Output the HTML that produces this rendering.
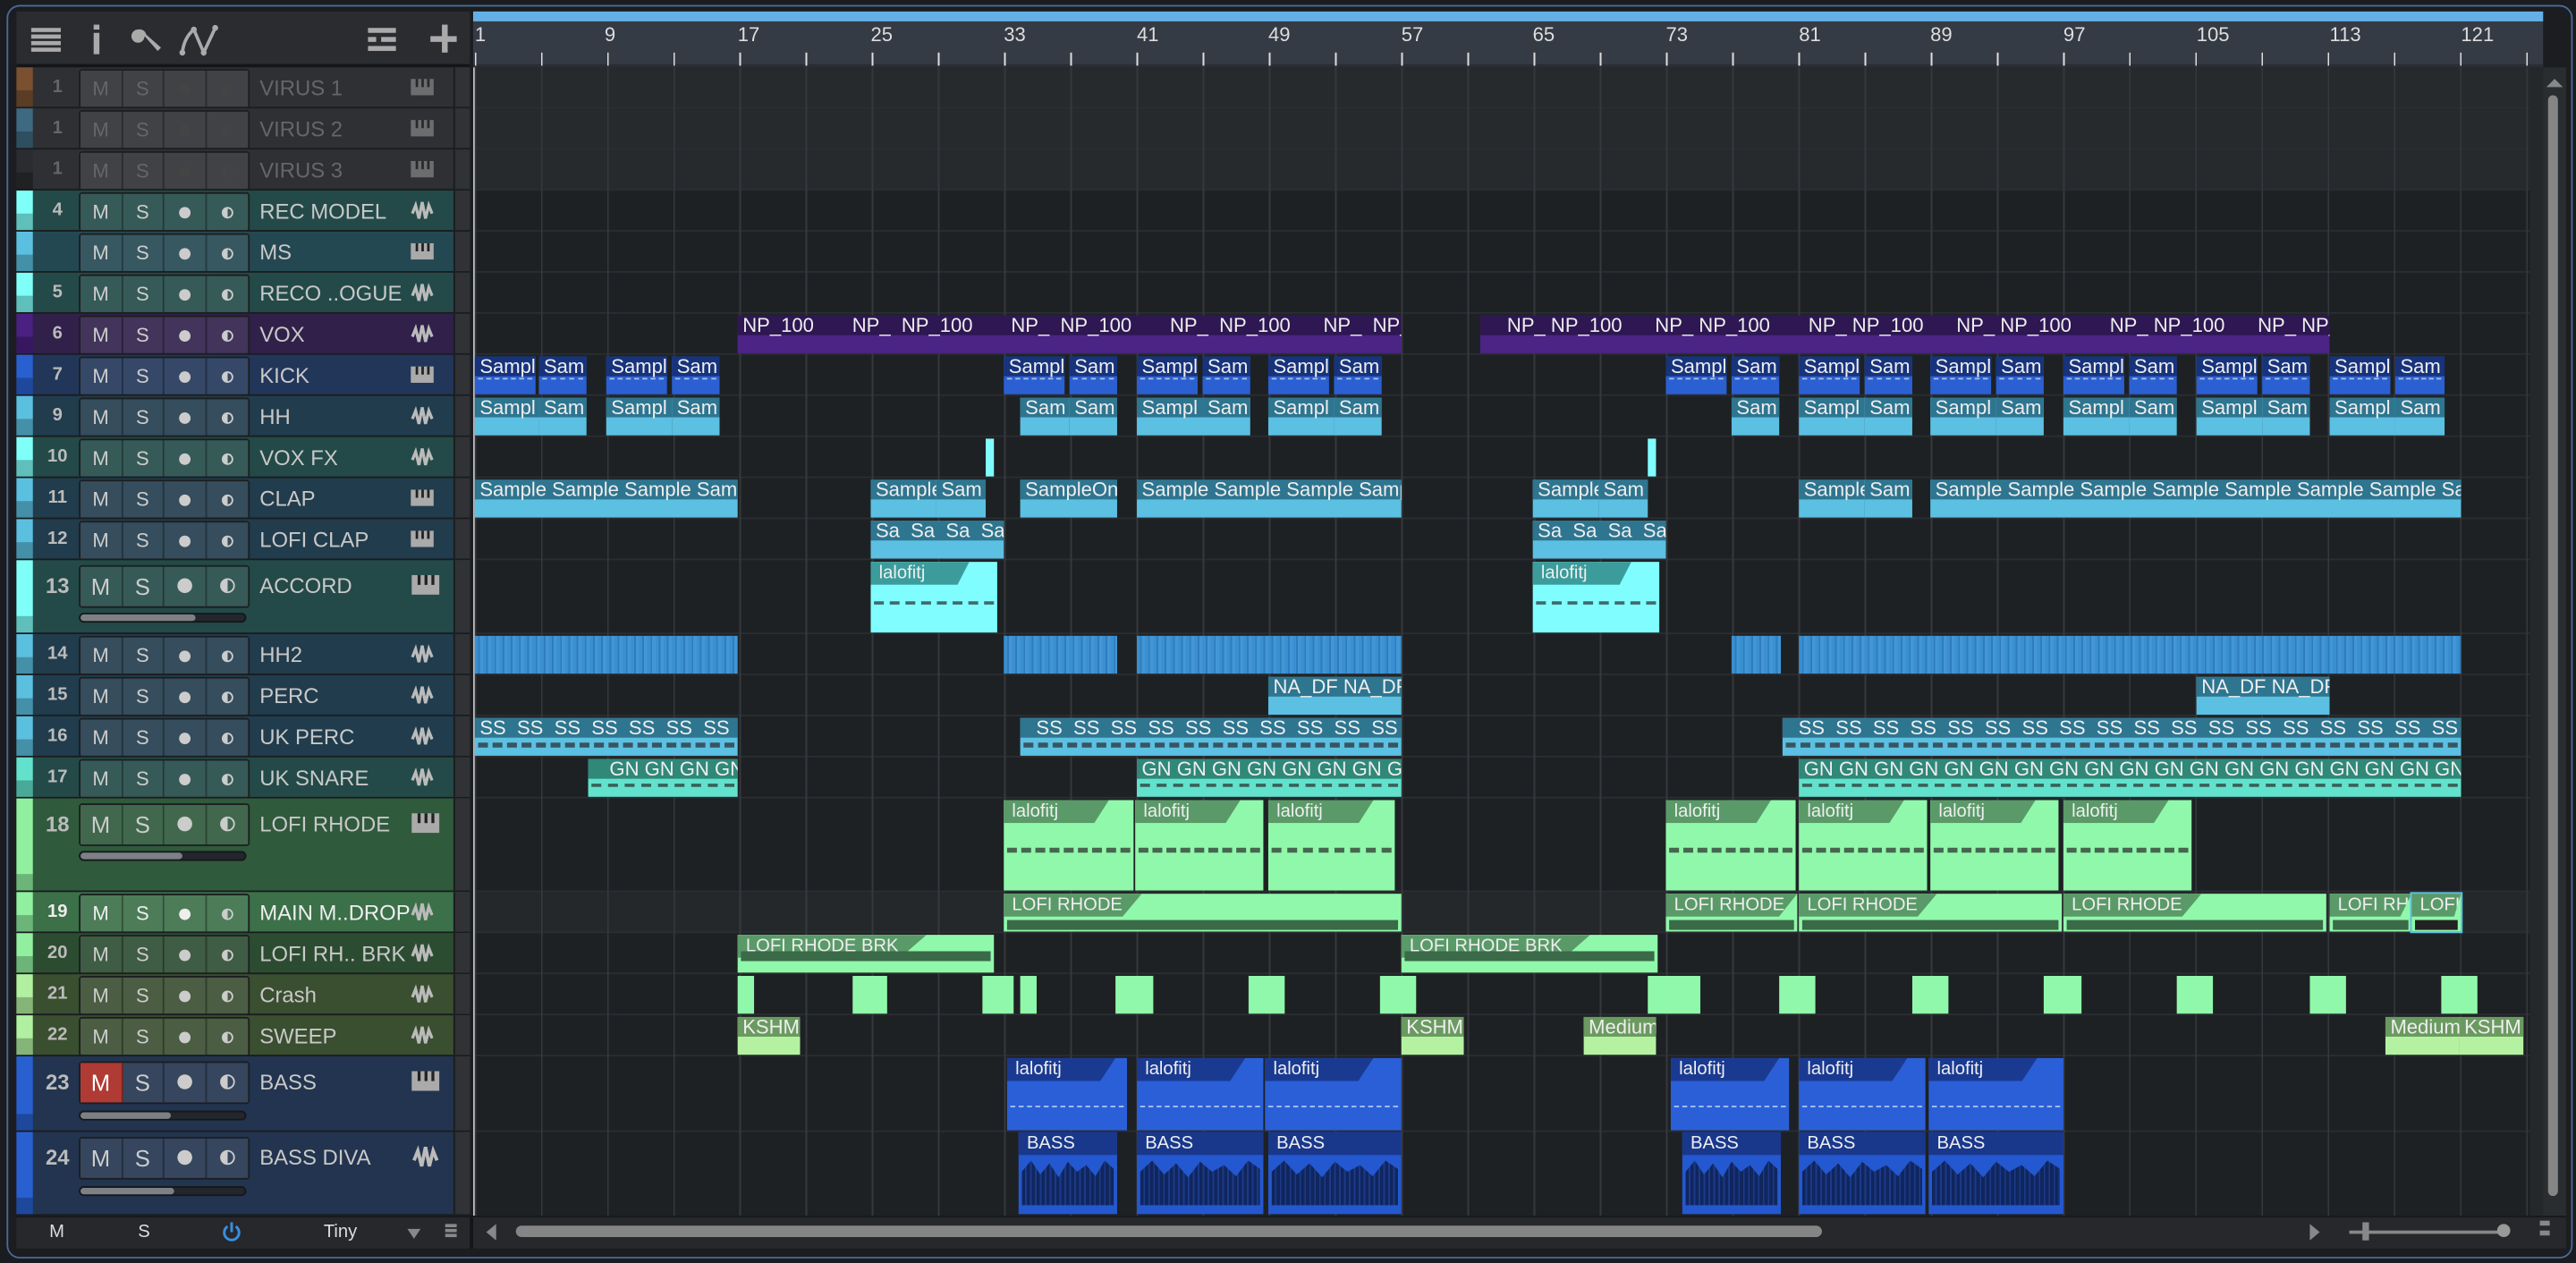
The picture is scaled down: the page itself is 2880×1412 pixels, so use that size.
<!DOCTYPE html>
<html><head><meta charset="utf-8"><style>
*{margin:0;padding:0;box-sizing:border-box}
html,body{width:2880px;height:1412px;overflow:hidden;background:#16181a}
#s{position:absolute;left:0;top:0;width:1568px;height:769px;transform:scale(1.83673);transform-origin:0 0;font-family:"Liberation Sans",sans-serif;background:#1a1c1f}
.a{position:absolute}
.frame{left:4px;top:3px;width:1562px;height:763px;border:1.5px solid #4a6a9a;border-radius:8px;background:#1b1d20}
.tr{position:absolute;left:10px;width:276px;border-bottom:1px solid #1a1c1e}
.st{position:absolute;left:0;top:0;width:10px;height:100%}
.st i{position:absolute;left:0;bottom:0;width:10px;height:10px;background:rgba(0,0,0,.25)}
.num{position:absolute;left:12px;width:26px;text-align:center;font-size:11px;font-weight:bold;color:#bbb}
.bt{position:absolute;left:38px;display:flex;border:1px solid #1c1e20;border-radius:2px}
.bt span{display:block;width:25.5px;border-right:1px solid rgba(0,0,0,.35);background:rgba(255,255,255,.09);color:#ccc;text-align:center;font-size:12px}
.bt span:last-child{border-right:0}
.dot{display:inline-block;width:7px;height:7px;border-radius:50%;background:#ccc}
.bt span:last-child .dot{background:linear-gradient(90deg,#ccc 50%,transparent 50%);border:1.5px solid #ccc}
.nm{position:absolute;left:148px;font-size:13px;color:#c8c8c8;white-space:nowrap}
.ic{position:absolute;left:240px}
.rc{position:absolute;left:266px;top:0;width:10px;height:100%;background:#303236;border-left:1px solid #1a1c1e}
.sl{position:absolute;left:38px;width:102px;height:6px;border-radius:3px;background:#23262a;border:1px solid #15171a}
.sl b{display:block;height:100%;border-radius:3px;background:#7d8084}
.dim .nm,.dim .num,.dim .bt span{color:#666}.dim .dot{background:#444}
.dim .bt span:last-child .dot{background:linear-gradient(90deg,#444 50%,transparent 50%);border-color:#444}
.row{position:absolute;left:288px;width:1260px;border-bottom:1px solid #2a2d31}
.c{position:absolute;overflow:hidden;font-size:12px;color:#eee;white-space:nowrap}
.c b{display:block;font-weight:normal;padding-left:3px;height:12px;line-height:12px}
.c.t b{height:14px;line-height:14px;font-size:11px;padding-left:5px}
.vox{background:#4b2486}.vox b{background:#2e1752}
.k{background:#2a60d2}.k b{background:#17337c}
.h{background:#5bc0e2}.h b{background:#2e7590}
.g{background:#62e2cc}.g b{background:#2f8878}
.cy{background:#80feff}.cy b{background:#3c9c9c;width:60px;clip-path:polygon(0 0,100% 0,88% 100%,0 100%)}
.hh2{background:repeating-linear-gradient(90deg,#3a8fd0 0 2px,#2f7cbd 2px 3px,#4196d6 3px 5px)}
.gr{background:#90f8aa}.gr b{background:#5a9a68;width:64px;clip-path:polygon(0 0,100% 0,86% 100%,0 100%)}
.gw{background:#90f8aa}.gw b{background:#5a9a68}
.sw{background:#b4f2a2}.sw b{background:#6a9a60}
.bs{background:#2a5fd8}.bs b{background:#1a3a92;width:66px;clip-path:polygon(0 0,100% 0,86% 100%,0 100%)}
.bd{background:#2458d0}.bd b{background:#19388c}
.wv{position:absolute;left:2px;right:2px;top:60%;border-top:2px dashed rgba(40,40,40,.7)}
.wl{position:absolute;left:2px;right:2px;top:58%;border-top:1px dashed rgba(255,255,255,.6)}
.bw{position:absolute;left:2px;right:2px;top:14px;bottom:2px;background:repeating-linear-gradient(90deg,#10265e 0 2px,#1b3a88 2px 3px);clip-path:polygon(0 30%,10% 10%,20% 35%,30% 15%,40% 40%,50% 12%,60% 30%,70% 18%,80% 38%,90% 10%,100% 25%,100% 90%,0 90%)}
.rl{position:absolute;top:14px;font-size:12px;color:#ddd}
</style></head><body><div id="s">
<div class="a frame"></div>
<!-- toolbar -->
<div class="a" style="left:10px;top:7px;width:276px;height:34px;background:#2a2c30;border-bottom:2px solid #141518"></div>
<svg class="a" style="left:18px;top:14px" width="260" height="20" viewBox="0 0 260 20">
<g fill="#aaa"><rect x="1" y="3" width="18" height="2.5"/><rect x="1" y="7" width="18" height="2.5"/><rect x="1" y="11" width="18" height="2.5"/><rect x="1" y="15" width="18" height="2.5"/>
<rect x="39" y="1" width="3.5" height="3"/><rect x="39" y="6" width="3.5" height="13"/>
<rect x="206" y="3" width="17" height="3"/><rect x="206" y="8.5" width="5" height="3"/><rect x="214" y="8.5" width="9" height="3"/><rect x="206" y="14" width="17" height="3"/>
<rect x="244" y="8" width="17" height="3.5"/><rect x="251" y="1" width="3.5" height="17"/></g>
<path d="M66 4a4 4 0 1 0 4 4l8 9 2-2-9-8a4 4 0 0 0-5-3" fill="#aaa"/>
<path d="M93 18q1-9 7-14l6 14 7-15" stroke="#aaa" stroke-width="2" fill="none"/>
<g fill="#aaa"><circle cx="93" cy="18" r="1.8"/><circle cx="100" cy="4" r="1.8"/><circle cx="106" cy="18" r="1.8"/><circle cx="113" cy="3" r="1.8"/></g>
</svg>
<!-- ruler -->
<div class="a" style="left:288px;top:7px;width:1260px;height:34px;background:#353b45;border-bottom:2px solid #2a2e34"></div>
<div class="a" style="left:288px;top:7px;width:1260px;height:6px;background:#64b0e6"></div>
<div class="a" style="left:289px;top:32px;width:1250px;height:8px;background:repeating-linear-gradient(90deg,#ddd 0 1px,transparent 1px 40.28px)"></div>
<div class="rl" style="left:289px">1</div><div class="rl" style="left:368px">9</div><div class="rl" style="left:449px">17</div><div class="rl" style="left:530px">25</div><div class="rl" style="left:611px">33</div><div class="rl" style="left:692px">41</div><div class="rl" style="left:772px">49</div><div class="rl" style="left:853px">57</div><div class="rl" style="left:933px">65</div><div class="rl" style="left:1014px">73</div><div class="rl" style="left:1095px">81</div><div class="rl" style="left:1175px">89</div><div class="rl" style="left:1256px">97</div><div class="rl" style="left:1337px">105</div><div class="rl" style="left:1418px">113</div><div class="rl" style="left:1498px">121</div>
<!-- timeline bg -->
<div class="a" style="left:288px;top:41px;width:1260px;height:699px;background:#1e2123"></div>
<div class="a" style="left:288px;top:41px;width:1260px;height:75px;background:#272a2d"></div>
<div class="a" style="left:288px;top:543px;width:1260px;height:25px;background:#25282b"></div>
<div class="row" style="top:41px;height:25px"></div><div class="row" style="top:66px;height:25px"></div><div class="row" style="top:91px;height:25px"></div><div class="row" style="top:116px;height:25px"></div><div class="row" style="top:141px;height:25px"></div><div class="row" style="top:166px;height:25px"></div><div class="row" style="top:191px;height:25px"></div><div class="row" style="top:216px;height:25px"></div><div class="row" style="top:241px;height:25px"></div><div class="row" style="top:266px;height:25px"></div><div class="row" style="top:291px;height:25px"></div><div class="row" style="top:316px;height:25px"></div><div class="row" style="top:341px;height:45px"></div><div class="row" style="top:386px;height:25px"></div><div class="row" style="top:411px;height:25px"></div><div class="row" style="top:436px;height:25px"></div><div class="row" style="top:461px;height:25px"></div><div class="row" style="top:486px;height:57px"></div><div class="row" style="top:543px;height:25px"></div><div class="row" style="top:568px;height:25px"></div><div class="row" style="top:593px;height:25px"></div><div class="row" style="top:618px;height:25px"></div><div class="row" style="top:643px;height:46px"></div>
<div class="a" style="left:289px;top:41px;width:1250px;height:699px;background:repeating-linear-gradient(90deg,#35383c 0 1px,transparent 1px 40.28px)"></div>
<div class="a" style="left:288px;top:41px;width:1px;height:699px;background:#bbb"></div>
<!-- right scroll -->
<div class="a" style="left:1540px;top:41px;width:8px;height:699px;background:#25282b"></div>
<div class="a" style="left:1548px;top:41px;width:14px;height:699px;background:#2a2d30"></div>
<div class="a" style="left:1550px;top:48px;width:0;height:0;border-left:5px solid transparent;border-right:5px solid transparent;border-bottom:5px solid #888"></div>
<div class="a" style="left:1551px;top:58px;width:6px;height:670px;border-radius:3px;background:#858585"></div>
<!-- clips -->
<div class="c vox" style="left:449px;top:192px;width:404px;height:23px"><b>NP_100&nbsp;&nbsp;&nbsp;&nbsp;&nbsp;&nbsp; NP_&nbsp;&nbsp;NP_100&nbsp;&nbsp;&nbsp;&nbsp;&nbsp;&nbsp;&nbsp;NP_&nbsp;&nbsp;NP_100&nbsp;&nbsp;&nbsp;&nbsp;&nbsp;&nbsp; NP_&nbsp;&nbsp;NP_100&nbsp;&nbsp;&nbsp;&nbsp;&nbsp;&nbsp;NP_&nbsp;&nbsp;NP_100&nbsp;&nbsp;&nbsp;&nbsp;&nbsp;&nbsp;&nbsp;NP_</b></div>
<div class="c vox" style="left:901px;top:192px;width:517px;height:23px"><b>&nbsp;&nbsp;&nbsp;&nbsp;NP_&nbsp;NP_100&nbsp;&nbsp;&nbsp;&nbsp;&nbsp;&nbsp;NP_&nbsp;NP_100&nbsp;&nbsp;&nbsp;&nbsp;&nbsp;&nbsp;&nbsp;NP_&nbsp;NP_100&nbsp;&nbsp;&nbsp;&nbsp;&nbsp;&nbsp;NP_&nbsp;NP_100&nbsp;&nbsp;&nbsp;&nbsp;&nbsp;&nbsp;&nbsp;NP_&nbsp;NP_100&nbsp;&nbsp;&nbsp;&nbsp;&nbsp;&nbsp;NP_&nbsp;NP_100&nbsp;&nbsp;&nbsp;&nbsp;&nbsp;&nbsp;NP_</b></div>
<!-- kick -->
<div class="c k" style="left:289px;top:217px;width:37px;height:23px"><b>Sampl</b><i class="wl"></i></div><div class="c k" style="left:328px;top:217px;width:29px;height:23px"><b>Sam</b><i class="wl"></i></div>
<div class="c k" style="left:369px;top:217px;width:37px;height:23px"><b>Sampl</b><i class="wl"></i></div><div class="c k" style="left:409px;top:217px;width:29px;height:23px"><b>Sam</b><i class="wl"></i></div>
<div class="c k" style="left:611px;top:217px;width:37px;height:23px"><b>Sampl</b><i class="wl"></i></div><div class="c k" style="left:651px;top:217px;width:29px;height:23px"><b>Sam</b><i class="wl"></i></div>
<div class="c k" style="left:692px;top:217px;width:37px;height:23px"><b>Sampl</b><i class="wl"></i></div><div class="c k" style="left:732px;top:217px;width:29px;height:23px"><b>Sam</b><i class="wl"></i></div>
<div class="c k" style="left:772px;top:217px;width:37px;height:23px"><b>Sampl</b><i class="wl"></i></div><div class="c k" style="left:812px;top:217px;width:29px;height:23px"><b>Sam</b><i class="wl"></i></div>
<div class="c k" style="left:1014px;top:217px;width:37px;height:23px"><b>Sampl</b><i class="wl"></i></div><div class="c k" style="left:1054px;top:217px;width:29px;height:23px"><b>Sam</b><i class="wl"></i></div>
<div class="c k" style="left:1095px;top:217px;width:37px;height:23px"><b>Sampl</b><i class="wl"></i></div><div class="c k" style="left:1135px;top:217px;width:29px;height:23px"><b>Sam</b><i class="wl"></i></div>
<div class="c k" style="left:1175px;top:217px;width:37px;height:23px"><b>Sampl</b><i class="wl"></i></div><div class="c k" style="left:1215px;top:217px;width:29px;height:23px"><b>Sam</b><i class="wl"></i></div>
<div class="c k" style="left:1256px;top:217px;width:37px;height:23px"><b>Sampl</b><i class="wl"></i></div><div class="c k" style="left:1296px;top:217px;width:29px;height:23px"><b>Sam</b><i class="wl"></i></div>
<div class="c k" style="left:1337px;top:217px;width:37px;height:23px"><b>Sampl</b><i class="wl"></i></div><div class="c k" style="left:1377px;top:217px;width:29px;height:23px"><b>Sam</b><i class="wl"></i></div>
<div class="c k" style="left:1418px;top:217px;width:37px;height:23px"><b>Sampl</b><i class="wl"></i></div><div class="c k" style="left:1458px;top:217px;width:30px;height:23px"><b>Sam</b><i class="wl"></i></div>
<!-- hh -->
<div class="c h" style="left:289px;top:242px;width:39px;height:23px"><b>Sampl</b></div><div class="c h" style="left:328px;top:242px;width:29px;height:23px"><b>Sam</b></div>
<div class="c h" style="left:369px;top:242px;width:40px;height:23px"><b>Sampl</b></div><div class="c h" style="left:409px;top:242px;width:29px;height:23px"><b>Sam</b></div>
<div class="c h" style="left:621px;top:242px;width:30px;height:23px"><b>Sam</b></div><div class="c h" style="left:651px;top:242px;width:29px;height:23px"><b>Sam</b></div>
<div class="c h" style="left:692px;top:242px;width:40px;height:23px"><b>Sampl</b></div><div class="c h" style="left:732px;top:242px;width:29px;height:23px"><b>Sam</b></div>
<div class="c h" style="left:772px;top:242px;width:40px;height:23px"><b>Sampl</b></div><div class="c h" style="left:812px;top:242px;width:29px;height:23px"><b>Sam</b></div>
<div class="c h" style="left:1054px;top:242px;width:29px;height:23px"><b>Sam</b></div>
<div class="c h" style="left:1095px;top:242px;width:40px;height:23px"><b>Sampl</b></div><div class="c h" style="left:1135px;top:242px;width:29px;height:23px"><b>Sam</b></div>
<div class="c h" style="left:1175px;top:242px;width:40px;height:23px"><b>Sampl</b></div><div class="c h" style="left:1215px;top:242px;width:29px;height:23px"><b>Sam</b></div>
<div class="c h" style="left:1256px;top:242px;width:40px;height:23px"><b>Sampl</b></div><div class="c h" style="left:1296px;top:242px;width:29px;height:23px"><b>Sam</b></div>
<div class="c h" style="left:1337px;top:242px;width:40px;height:23px"><b>Sampl</b></div><div class="c h" style="left:1377px;top:242px;width:29px;height:23px"><b>Sam</b></div>
<div class="c h" style="left:1418px;top:242px;width:40px;height:23px"><b>Sampl</b></div><div class="c h" style="left:1458px;top:242px;width:30px;height:23px"><b>Sam</b></div>
<!-- vox fx -->
<div class="c" style="left:600px;top:267px;width:5px;height:23px;background:#80feff"></div>
<div class="c" style="left:1003px;top:267px;width:5px;height:23px;background:#80feff"></div>
<!-- clap -->
<div class="c h" style="left:289px;top:292px;width:160px;height:23px"><b>Sample&nbsp;Sample&nbsp;Sample&nbsp;Sample</b></div>
<div class="c h" style="left:530px;top:292px;width:40px;height:23px"><b>Sample</b></div><div class="c h" style="left:570px;top:292px;width:30px;height:23px"><b>Sam</b></div>
<div class="c h" style="left:621px;top:292px;width:59px;height:23px"><b>SampleOn</b></div>
<div class="c h" style="left:692px;top:292px;width:161px;height:23px"><b>Sample&nbsp;Sample&nbsp;Sample&nbsp;Sample</b></div>
<div class="c h" style="left:933px;top:292px;width:40px;height:23px"><b>Sample</b></div><div class="c h" style="left:973px;top:292px;width:30px;height:23px"><b>Sam</b></div>
<div class="c h" style="left:1095px;top:292px;width:40px;height:23px"><b>Sample</b></div><div class="c h" style="left:1135px;top:292px;width:29px;height:23px"><b>Sam</b></div>
<div class="c h" style="left:1175px;top:292px;width:323px;height:23px"><b>Sample&nbsp;Sample&nbsp;Sample&nbsp;Sample&nbsp;Sample&nbsp;Sample&nbsp;Sample&nbsp;Sample</b></div>
<!-- lofi clap -->
<div class="c h" style="left:530px;top:317px;width:81px;height:23px"><b>Sa&nbsp;&nbsp;Sa&nbsp;&nbsp;Sa&nbsp;&nbsp;Sa</b></div>
<div class="c h" style="left:933px;top:317px;width:81px;height:23px"><b>Sa&nbsp;&nbsp;Sa&nbsp;&nbsp;Sa&nbsp;&nbsp;Sa</b></div>
<!-- accord -->
<div class="c t cy" style="left:530px;top:342px;width:77px;height:43px"><b>lalofitj</b><i class="wv" style="top:55%"></i></div>
<div class="c t cy" style="left:933px;top:342px;width:77px;height:43px"><b>lalofitj</b><i class="wv" style="top:55%"></i></div>
<!-- hh2 -->
<div class="c hh2" style="left:289px;top:387px;width:160px;height:23px"></div>
<div class="c hh2" style="left:611px;top:387px;width:69px;height:23px"></div>
<div class="c hh2" style="left:692px;top:387px;width:161px;height:23px"></div>
<div class="c hh2" style="left:1054px;top:387px;width:30px;height:23px"></div>
<div class="c hh2" style="left:1095px;top:387px;width:403px;height:23px"></div>
<!-- perc -->
<div class="c h" style="left:772px;top:412px;width:81px;height:23px"><b>NA_DF&nbsp;NA_DF</b></div>
<div class="c h" style="left:1337px;top:412px;width:81px;height:23px"><b>NA_DF&nbsp;NA_DF</b></div>
<!-- uk perc -->
<div class="c h" style="left:289px;top:437px;width:160px;height:23px"><b>SS&nbsp;&nbsp;SS&nbsp;&nbsp;SS&nbsp;&nbsp;SS&nbsp;&nbsp;SS&nbsp;&nbsp;SS&nbsp;&nbsp;SS&nbsp;&nbsp;SS</b><i class="wv" style="top:65%;border-top-width:3px"></i></div>
<div class="c h" style="left:621px;top:437px;width:232px;height:23px"><b>&nbsp;&nbsp;SS&nbsp;&nbsp;SS&nbsp;&nbsp;SS&nbsp;&nbsp;SS&nbsp;&nbsp;SS&nbsp;&nbsp;SS&nbsp;&nbsp;SS&nbsp;&nbsp;SS&nbsp;&nbsp;SS&nbsp;&nbsp;SS&nbsp;&nbsp;SS</b><i class="wv" style="top:65%;border-top-width:3px"></i></div>
<div class="c h" style="left:1085px;top:437px;width:413px;height:23px"><b>&nbsp;&nbsp;SS&nbsp;&nbsp;SS&nbsp;&nbsp;SS&nbsp;&nbsp;SS&nbsp;&nbsp;SS&nbsp;&nbsp;SS&nbsp;&nbsp;SS&nbsp;&nbsp;SS&nbsp;&nbsp;SS&nbsp;&nbsp;SS&nbsp;&nbsp;SS&nbsp;&nbsp;SS&nbsp;&nbsp;SS&nbsp;&nbsp;SS&nbsp;&nbsp;SS&nbsp;&nbsp;SS&nbsp;&nbsp;SS&nbsp;&nbsp;SS&nbsp;&nbsp;SS&nbsp;&nbsp;SS</b><i class="wv" style="top:65%;border-top-width:3px"></i></div>
<!-- uk snare -->
<div class="c g" style="left:358px;top:462px;width:91px;height:23px"><b>&nbsp;&nbsp;&nbsp;GN&nbsp;GN&nbsp;GN&nbsp;GN</b><i class="wv" style="top:65%"></i></div>
<div class="c g" style="left:692px;top:462px;width:161px;height:23px"><b>GN&nbsp;GN&nbsp;GN&nbsp;GN&nbsp;GN&nbsp;GN&nbsp;GN&nbsp;GN</b><i class="wv" style="top:65%"></i></div>
<div class="c g" style="left:1095px;top:462px;width:403px;height:23px"><b>GN&nbsp;GN&nbsp;GN&nbsp;GN&nbsp;GN&nbsp;GN&nbsp;GN&nbsp;GN&nbsp;GN&nbsp;GN&nbsp;GN&nbsp;GN&nbsp;GN&nbsp;GN&nbsp;GN&nbsp;GN&nbsp;GN&nbsp;GN&nbsp;GN&nbsp;GN</b><i class="wv" style="top:65%"></i></div>
<!-- lofi rhode -->
<div class="c t gr" style="left:611px;top:487px;width:79px;height:55px"><b>lalofitj</b><i class="wv" style="top:52%;border-top-width:3px"></i></div>
<div class="c t gr" style="left:691px;top:487px;width:78px;height:55px"><b>lalofitj</b><i class="wv" style="top:52%;border-top-width:3px"></i></div>
<div class="c t gr" style="left:772px;top:487px;width:77px;height:55px"><b>lalofitj</b><i class="wv" style="top:52%;border-top-width:3px"></i></div>
<div class="c t gr" style="left:1014px;top:487px;width:79px;height:55px"><b>lalofitj</b><i class="wv" style="top:52%;border-top-width:3px"></i></div>
<div class="c t gr" style="left:1095px;top:487px;width:78px;height:55px"><b>lalofitj</b><i class="wv" style="top:52%;border-top-width:3px"></i></div>
<div class="c t gr" style="left:1175px;top:487px;width:78px;height:55px"><b>lalofitj</b><i class="wv" style="top:52%;border-top-width:3px"></i></div>
<div class="c t gr" style="left:1256px;top:487px;width:78px;height:55px"><b>lalofitj</b><i class="wv" style="top:52%;border-top-width:3px"></i></div>
<!-- main drop -->
<div class="c t gr" style="left:611px;top:544px;width:242px;height:23px"><b style="width:84px">LOFI RHODE</b><i class="wv" style="top:70%;border-top-width:3px;border-style:solid;border-color:#3a6a48"></i></div>
<div class="c t gr" style="left:1014px;top:544px;width:80px;height:23px"><b style="width:80px">LOFI RHODE</b><i class="wv" style="top:70%;border-top-width:3px;border-style:solid;border-color:#3a6a48"></i></div>
<div class="c t gr" style="left:1095px;top:544px;width:160px;height:23px"><b style="width:84px">LOFI RHODE</b><i class="wv" style="top:70%;border-top-width:3px;border-style:solid;border-color:#3a6a48"></i></div>
<div class="c t gr" style="left:1256px;top:544px;width:160px;height:23px"><b style="width:84px">LOFI RHODE</b><i class="wv" style="top:70%;border-top-width:3px;border-style:solid;border-color:#3a6a48"></i></div>
<div class="c t gr" style="left:1418px;top:544px;width:50px;height:23px"><b style="width:50px">LOFI RH</b><i class="wv" style="top:70%;border-top-width:3px;border-style:solid;border-color:#3a6a48"></i></div>
<div class="c t gr" style="left:1468px;top:544px;width:30px;height:23px;outline:1px solid #5bc0e2"><b style="width:30px">LOFI</b><i class="wv" style="top:70%;border-top-width:3px;border-style:solid;border-color:#222"></i></div>
<!-- brk -->
<div class="c t gr" style="left:449px;top:569px;width:156px;height:23px"><b style="width:115px">LOFI RHODE BRK</b><i class="wv" style="top:45%;border-top-width:3px;border-style:solid;border-color:#3a6a48"></i></div>
<div class="c t gr" style="left:853px;top:569px;width:156px;height:23px"><b style="width:115px">LOFI RHODE BRK</b><i class="wv" style="top:45%;border-top-width:3px;border-style:solid;border-color:#3a6a48"></i></div>
<!-- crash -->
<div class="c gw" style="left:449px;top:594px;width:10px;height:23px"></div><div class="c gw" style="left:519px;top:594px;width:21px;height:23px"></div><div class="c gw" style="left:598px;top:594px;width:19px;height:23px"></div><div class="c gw" style="left:621px;top:594px;width:10px;height:23px"></div><div class="c gw" style="left:679px;top:594px;width:23px;height:23px"></div><div class="c gw" style="left:760px;top:594px;width:22px;height:23px"></div><div class="c gw" style="left:840px;top:594px;width:22px;height:23px"></div><div class="c gw" style="left:1003px;top:594px;width:32px;height:23px"></div><div class="c gw" style="left:1083px;top:594px;width:22px;height:23px"></div><div class="c gw" style="left:1164px;top:594px;width:22px;height:23px"></div><div class="c gw" style="left:1244px;top:594px;width:23px;height:23px"></div><div class="c gw" style="left:1325px;top:594px;width:22px;height:23px"></div><div class="c gw" style="left:1406px;top:594px;width:22px;height:23px"></div><div class="c gw" style="left:1486px;top:594px;width:22px;height:23px"></div>
<!-- sweep -->
<div class="c sw" style="left:449px;top:619px;width:38px;height:23px"><b>KSHM</b></div>
<div class="c sw" style="left:853px;top:619px;width:38px;height:23px"><b>KSHM</b></div>
<div class="c sw" style="left:964px;top:619px;width:44px;height:23px"><b>Medium</b></div>
<div class="c sw" style="left:1452px;top:619px;width:45px;height:23px"><b>Medium</b></div>
<div class="c sw" style="left:1497px;top:619px;width:39px;height:23px"><b>KSHM</b></div>
<!-- bass -->
<div class="c t bs" style="left:613px;top:644px;width:73px;height:44px"><b>lalofitj</b><i class="wl" style="top:65%"></i></div>
<div class="c t bs" style="left:692px;top:644px;width:77px;height:44px"><b>lalofitj</b><i class="wl" style="top:65%"></i></div>
<div class="c t bs" style="left:770px;top:644px;width:83px;height:44px"><b>lalofitj</b><i class="wl" style="top:65%"></i></div>
<div class="c t bs" style="left:1017px;top:644px;width:72px;height:44px"><b>lalofitj</b><i class="wl" style="top:65%"></i></div>
<div class="c t bs" style="left:1095px;top:644px;width:77px;height:44px"><b>lalofitj</b><i class="wl" style="top:65%"></i></div>
<div class="c t bs" style="left:1174px;top:644px;width:82px;height:44px"><b>lalofitj</b><i class="wl" style="top:65%"></i></div>
<!-- bass diva -->
<div class="c t bd" style="left:620px;top:689px;width:60px;height:50px"><b>BASS</b><i class="bw"></i></div>
<div class="c t bd" style="left:692px;top:689px;width:77px;height:50px"><b>BASS</b><i class="bw"></i></div>
<div class="c t bd" style="left:772px;top:689px;width:81px;height:50px"><b>BASS</b><i class="bw"></i></div>
<div class="c t bd" style="left:1024px;top:689px;width:60px;height:50px"><b>BASS</b><i class="bw"></i></div>
<div class="c t bd" style="left:1095px;top:689px;width:77px;height:50px"><b>BASS</b><i class="bw"></i></div>
<div class="c t bd" style="left:1174px;top:689px;width:82px;height:50px"><b>BASS</b><i class="bw"></i></div>

<!-- track list -->
<svg width="0" height="0" class="a"><defs>
<g id="pk"><rect x="0" y="0" width="14" height="10" fill="#aaa"/><rect x="3" y="0" width="1.5" height="5" fill="#222"/><rect x="6.5" y="0" width="1.5" height="5" fill="#222"/><rect x="10" y="0" width="1.5" height="5" fill="#222"/></g>
<path id="wf" d="M1 8l2-5 2 8 2-10 2 10 2-8 2 5" stroke="#bbb" stroke-width="1.8" fill="none"/>
</defs></svg>
<div class="tr dim" style="top:41px;height:25px;background:#2e3033"><div class="st" style="background:#7a5030"><i></i></div><div class="num" style="top:6px">1</div><div class="bt" style="top:1px"><span style="height:22px;line-height:22px">M</span><span style="height:22px;line-height:22px">S</span><span style="height:22px;line-height:22px"><i class="dot"></i></span><span style="height:22px;line-height:22px"><i class="dot"></i></span></div><div class="nm" style="top:5px">VIRUS 1</div><svg class="ic" style="top:7px" width="14" height="10"><use href="#pk" opacity=".5"/></svg><div class="rc"></div></div>
<div class="tr dim" style="top:66px;height:25px;background:#2e3033"><div class="st" style="background:#3d6a80"><i></i></div><div class="num" style="top:6px">1</div><div class="bt" style="top:1px"><span style="height:22px;line-height:22px">M</span><span style="height:22px;line-height:22px">S</span><span style="height:22px;line-height:22px"><i class="dot"></i></span><span style="height:22px;line-height:22px"><i class="dot"></i></span></div><div class="nm" style="top:5px">VIRUS 2</div><svg class="ic" style="top:7px" width="14" height="10"><use href="#pk" opacity=".5"/></svg><div class="rc"></div></div>
<div class="tr dim" style="top:91px;height:25px;background:#2e3033"><div class="st" style="background:#2a2c2f"><i></i></div><div class="num" style="top:6px">1</div><div class="bt" style="top:1px"><span style="height:22px;line-height:22px">M</span><span style="height:22px;line-height:22px">S</span><span style="height:22px;line-height:22px"><i class="dot"></i></span><span style="height:22px;line-height:22px"><i class="dot"></i></span></div><div class="nm" style="top:5px">VIRUS 3</div><svg class="ic" style="top:7px" width="14" height="10"><use href="#pk" opacity=".5"/></svg><div class="rc"></div></div>

<div class="tr" style="top:116px;height:25px;background:#234a48"><div class="st" style="background:#7ffff8"><i></i></div><div class="num" style="top:6px">4</div><div class="bt" style="top:1px"><span style="height:22px;line-height:22px">M</span><span style="height:22px;line-height:22px">S</span><span style="height:22px;line-height:22px"><i class="dot"></i></span><span style="height:22px;line-height:22px"><i class="dot"></i></span></div><div class="nm" style="top:5px">REC MODEL</div><svg class="ic" style="top:6px" width="14" height="12"><use href="#wf"/></svg><div class="rc"></div></div>
<div class="tr" style="top:141px;height:25px;background:#244852"><div class="st" style="background:#5bc0e0"><i></i></div><div class="bt" style="top:1px"><span style="height:22px;line-height:22px">M</span><span style="height:22px;line-height:22px">S</span><span style="height:22px;line-height:22px"><i class="dot"></i></span><span style="height:22px;line-height:22px"><i class="dot"></i></span></div><div class="nm" style="top:5px">MS</div><svg class="ic" style="top:7px" width="14" height="10"><use href="#pk"/></svg><div class="rc"></div></div>
<div class="tr" style="top:166px;height:25px;background:#234a48"><div class="st" style="background:#7ffff8"><i></i></div><div class="num" style="top:6px">5</div><div class="bt" style="top:1px"><span style="height:22px;line-height:22px">M</span><span style="height:22px;line-height:22px">S</span><span style="height:22px;line-height:22px"><i class="dot"></i></span><span style="height:22px;line-height:22px"><i class="dot"></i></span></div><div class="nm" style="top:5px">RECO ..OGUE</div><svg class="ic" style="top:6px" width="14" height="12"><use href="#wf"/></svg><div class="rc"></div></div>
<div class="tr" style="top:191px;height:25px;background:#30204a"><div class="st" style="background:#4a2080"><i></i></div><div class="num" style="top:6px">6</div><div class="bt" style="top:1px"><span style="height:22px;line-height:22px">M</span><span style="height:22px;line-height:22px">S</span><span style="height:22px;line-height:22px"><i class="dot"></i></span><span style="height:22px;line-height:22px"><i class="dot"></i></span></div><div class="nm" style="top:5px">VOX</div><svg class="ic" style="top:6px" width="14" height="12"><use href="#wf"/></svg><div class="rc"></div></div>
<div class="tr" style="top:216px;height:25px;background:#22365a"><div class="st" style="background:#2860d0"><i></i></div><div class="num" style="top:6px">7</div><div class="bt" style="top:1px"><span style="height:22px;line-height:22px">M</span><span style="height:22px;line-height:22px">S</span><span style="height:22px;line-height:22px"><i class="dot"></i></span><span style="height:22px;line-height:22px"><i class="dot"></i></span></div><div class="nm" style="top:5px">KICK</div><svg class="ic" style="top:7px" width="14" height="10"><use href="#pk"/></svg><div class="rc"></div></div>
<div class="tr" style="top:241px;height:25px;background:#213c4c"><div class="st" style="background:#5bc0e0"><i></i></div><div class="num" style="top:6px">9</div><div class="bt" style="top:1px"><span style="height:22px;line-height:22px">M</span><span style="height:22px;line-height:22px">S</span><span style="height:22px;line-height:22px"><i class="dot"></i></span><span style="height:22px;line-height:22px"><i class="dot"></i></span></div><div class="nm" style="top:5px">HH</div><svg class="ic" style="top:6px" width="14" height="12"><use href="#wf"/></svg><div class="rc"></div></div>
<div class="tr" style="top:266px;height:25px;background:#234a48"><div class="st" style="background:#7ffff8"><i></i></div><div class="num" style="top:6px">10</div><div class="bt" style="top:1px"><span style="height:22px;line-height:22px">M</span><span style="height:22px;line-height:22px">S</span><span style="height:22px;line-height:22px"><i class="dot"></i></span><span style="height:22px;line-height:22px"><i class="dot"></i></span></div><div class="nm" style="top:5px">VOX FX</div><svg class="ic" style="top:6px" width="14" height="12"><use href="#wf"/></svg><div class="rc"></div></div>
<div class="tr" style="top:291px;height:25px;background:#213c4c"><div class="st" style="background:#5bc0e0"><i></i></div><div class="num" style="top:6px">11</div><div class="bt" style="top:1px"><span style="height:22px;line-height:22px">M</span><span style="height:22px;line-height:22px">S</span><span style="height:22px;line-height:22px"><i class="dot"></i></span><span style="height:22px;line-height:22px"><i class="dot"></i></span></div><div class="nm" style="top:5px">CLAP</div><svg class="ic" style="top:7px" width="14" height="10"><use href="#pk"/></svg><div class="rc"></div></div>
<div class="tr" style="top:316px;height:25px;background:#213c4c"><div class="st" style="background:#5bc0e0"><i></i></div><div class="num" style="top:6px">12</div><div class="bt" style="top:1px"><span style="height:22px;line-height:22px">M</span><span style="height:22px;line-height:22px">S</span><span style="height:22px;line-height:22px"><i class="dot"></i></span><span style="height:22px;line-height:22px"><i class="dot"></i></span></div><div class="nm" style="top:5px">LOFI CLAP</div><svg class="ic" style="top:7px" width="14" height="10"><use href="#pk"/></svg><div class="rc"></div></div>
<div class="tr" style="top:341px;height:45px;background:#234a48"><div class="st" style="background:#7ffff8"><i></i></div><div class="num" style="top:8px;font-size:13px">13</div><div class="bt" style="top:3px"><span style="height:24px;line-height:24px;font-size:14px">M</span><span style="height:24px;line-height:24px;font-size:14px">S</span><span style="height:24px;line-height:24px"><i class="dot" style="width:9px;height:9px"></i></span><span style="height:24px;line-height:24px"><i class="dot" style="width:9px;height:9px"></i></span></div><div class="nm" style="top:8px">ACCORD</div><svg class="ic" style="top:9px" width="18" height="12" viewBox="0 0 14 10"><use href="#pk"/></svg><div class="sl" style="top:32px"><b style="width:70%"></b></div><div class="rc"></div></div>
<div class="tr" style="top:386px;height:25px;background:#213c4c"><div class="st" style="background:#5bc0e0"><i></i></div><div class="num" style="top:6px">14</div><div class="bt" style="top:1px"><span style="height:22px;line-height:22px">M</span><span style="height:22px;line-height:22px">S</span><span style="height:22px;line-height:22px"><i class="dot"></i></span><span style="height:22px;line-height:22px"><i class="dot"></i></span></div><div class="nm" style="top:5px">HH2</div><svg class="ic" style="top:6px" width="14" height="12"><use href="#wf"/></svg><div class="rc"></div></div>
<div class="tr" style="top:411px;height:25px;background:#213c4c"><div class="st" style="background:#5bc0e0"><i></i></div><div class="num" style="top:6px">15</div><div class="bt" style="top:1px"><span style="height:22px;line-height:22px">M</span><span style="height:22px;line-height:22px">S</span><span style="height:22px;line-height:22px"><i class="dot"></i></span><span style="height:22px;line-height:22px"><i class="dot"></i></span></div><div class="nm" style="top:5px">PERC</div><svg class="ic" style="top:6px" width="14" height="12"><use href="#wf"/></svg><div class="rc"></div></div>
<div class="tr" style="top:436px;height:25px;background:#213c4c"><div class="st" style="background:#5bc0e0"><i></i></div><div class="num" style="top:6px">16</div><div class="bt" style="top:1px"><span style="height:22px;line-height:22px">M</span><span style="height:22px;line-height:22px">S</span><span style="height:22px;line-height:22px"><i class="dot"></i></span><span style="height:22px;line-height:22px"><i class="dot"></i></span></div><div class="nm" style="top:5px">UK PERC</div><svg class="ic" style="top:6px" width="14" height="12"><use href="#wf"/></svg><div class="rc"></div></div>
<div class="tr" style="top:461px;height:25px;background:#234a48"><div class="st" style="background:#62e2cc"><i></i></div><div class="num" style="top:6px">17</div><div class="bt" style="top:1px"><span style="height:22px;line-height:22px">M</span><span style="height:22px;line-height:22px">S</span><span style="height:22px;line-height:22px"><i class="dot"></i></span><span style="height:22px;line-height:22px"><i class="dot"></i></span></div><div class="nm" style="top:5px">UK SNARE</div><svg class="ic" style="top:6px" width="14" height="12"><use href="#wf"/></svg><div class="rc"></div></div>
<div class="tr" style="top:486px;height:57px;background:#2f5a3c"><div class="st" style="background:#90f0a0"><i></i></div><div class="num" style="top:8px;font-size:13px">18</div><div class="bt" style="top:3px"><span style="height:24px;line-height:24px;font-size:14px">M</span><span style="height:24px;line-height:24px;font-size:14px">S</span><span style="height:24px;line-height:24px"><i class="dot" style="width:9px;height:9px"></i></span><span style="height:24px;line-height:24px"><i class="dot" style="width:9px;height:9px"></i></span></div><div class="nm" style="top:8px">LOFI RHODE</div><svg class="ic" style="top:9px" width="18" height="12" viewBox="0 0 14 10"><use href="#pk"/></svg><div class="sl" style="top:32px"><b style="width:62%"></b></div><div class="rc"></div></div>
<div class="tr" style="top:543px;height:25px;background:#3b7048"><div class="st" style="background:#90f0a0"><i></i></div><div class="num" style="top:6px;color:#eee">19</div><div class="bt" style="top:1px"><span style="height:22px;line-height:22px;color:#eee">M</span><span style="height:22px;line-height:22px;color:#eee">S</span><span style="height:22px;line-height:22px"><i class="dot" style="background:#eee"></i></span><span style="height:22px;line-height:22px"><i class="dot"></i></span></div><div class="nm" style="top:5px;color:#eee">MAIN M..DROP</div><svg class="ic" style="top:6px" width="14" height="12"><use href="#wf"/></svg><div class="rc"></div></div>
<div class="tr" style="top:568px;height:25px;background:#2c4c32"><div class="st" style="background:#90f0a0"><i></i></div><div class="num" style="top:6px">20</div><div class="bt" style="top:1px"><span style="height:22px;line-height:22px">M</span><span style="height:22px;line-height:22px">S</span><span style="height:22px;line-height:22px"><i class="dot"></i></span><span style="height:22px;line-height:22px"><i class="dot"></i></span></div><div class="nm" style="top:5px">LOFI RH.. BRK</div><svg class="ic" style="top:6px" width="14" height="12"><use href="#wf"/></svg><div class="rc"></div></div>
<div class="tr" style="top:593px;height:25px;background:#3a4e30"><div class="st" style="background:#b0f0a0"><i></i></div><div class="num" style="top:6px">21</div><div class="bt" style="top:1px"><span style="height:22px;line-height:22px">M</span><span style="height:22px;line-height:22px">S</span><span style="height:22px;line-height:22px"><i class="dot"></i></span><span style="height:22px;line-height:22px"><i class="dot"></i></span></div><div class="nm" style="top:5px">Crash</div><svg class="ic" style="top:6px" width="14" height="12"><use href="#wf"/></svg><div class="rc"></div></div>
<div class="tr" style="top:618px;height:25px;background:#3a4e30"><div class="st" style="background:#b0f0a0"><i></i></div><div class="num" style="top:6px">22</div><div class="bt" style="top:1px"><span style="height:22px;line-height:22px">M</span><span style="height:22px;line-height:22px">S</span><span style="height:22px;line-height:22px"><i class="dot"></i></span><span style="height:22px;line-height:22px"><i class="dot"></i></span></div><div class="nm" style="top:5px">SWEEP</div><svg class="ic" style="top:6px" width="14" height="12"><use href="#wf"/></svg><div class="rc"></div></div>
<div class="tr" style="top:643px;height:46px;background:#22344f"><div class="st" style="background:#2860d0"><i></i></div><div class="num" style="top:8px;font-size:13px">23</div><div class="bt" style="top:3px"><span style="height:24px;line-height:24px;font-size:14px;background:#b03a34;color:#fff">M</span><span style="height:24px;line-height:24px;font-size:14px">S</span><span style="height:24px;line-height:24px"><i class="dot" style="width:9px;height:9px"></i></span><span style="height:24px;line-height:24px"><i class="dot" style="width:9px;height:9px"></i></span></div><div class="nm" style="top:8px">BASS</div><svg class="ic" style="top:9px" width="18" height="12" viewBox="0 0 14 10"><use href="#pk"/></svg><div class="sl" style="top:33px"><b style="width:55%"></b></div><div class="rc"></div></div>
<div class="tr" style="top:689px;height:51px;background:#22344f"><div class="st" style="background:#2860d0"><i></i></div><div class="num" style="top:8px;font-size:13px">24</div><div class="bt" style="top:3px"><span style="height:24px;line-height:24px;font-size:14px">M</span><span style="height:24px;line-height:24px;font-size:14px">S</span><span style="height:24px;line-height:24px"><i class="dot" style="width:9px;height:9px"></i></span><span style="height:24px;line-height:24px"><i class="dot" style="width:9px;height:9px"></i></span></div><div class="nm" style="top:8px">BASS DIVA</div><svg class="ic" style="top:8px" width="18" height="14" viewBox="0 0 14 12"><use href="#wf"/></svg><div class="sl" style="top:33px"><b style="width:57%"></b></div><div class="rc"></div></div>
<!-- bottom bar -->
<div class="a" style="left:10px;top:740px;width:1552px;height:20px;background:#26282b;border-top:1px solid #17191b"></div>
<div class="a" style="left:30px;top:744px;font-size:11px;color:#ddd">M</div>
<div class="a" style="left:84px;top:744px;font-size:11px;color:#ddd">S</div>
<svg class="a" style="left:135px;top:743px" width="12" height="13"><path d="M3.5 3.5a4.5 4.5 0 1 0 5 0" stroke="#3a8fe0" stroke-width="1.6" fill="none"/><path d="M6 1v6" stroke="#3a8fe0" stroke-width="1.6"/></svg>
<div class="a" style="left:197px;top:744px;font-size:11px;color:#ddd">Tiny</div>
<div class="a" style="left:248px;top:748px;border-left:4px solid transparent;border-right:4px solid transparent;border-top:6px solid #888"></div>
<div class="a" style="left:271px;top:745px;width:7px;height:2px;background:#888;box-shadow:0 3px #888,0 6px #888"></div>
<div class="a" style="left:286px;top:740px;width:2px;height:20px;background:#141517"></div>
<div class="a" style="left:296px;top:745px;border-top:5px solid transparent;border-bottom:5px solid transparent;border-right:6px solid #888"></div>
<div class="a" style="left:314px;top:746px;width:795px;height:7px;border-radius:4px;background:#858585"></div>
<div class="a" style="left:1406px;top:745px;border-top:5px solid transparent;border-bottom:5px solid transparent;border-left:6px solid #888"></div>
<div class="a" style="left:1430px;top:749px;width:96px;height:2px;background:#888"></div>
<div class="a" style="left:1438px;top:744px;width:4px;height:11px;background:#888"></div>
<div class="a" style="left:1520px;top:745px;width:8px;height:8px;border-radius:50%;background:#999"></div>
<div class="a" style="left:1546px;top:743px;width:6px;height:3px;background:#888;box-shadow:0 6px #888"></div>
</div></body></html>
